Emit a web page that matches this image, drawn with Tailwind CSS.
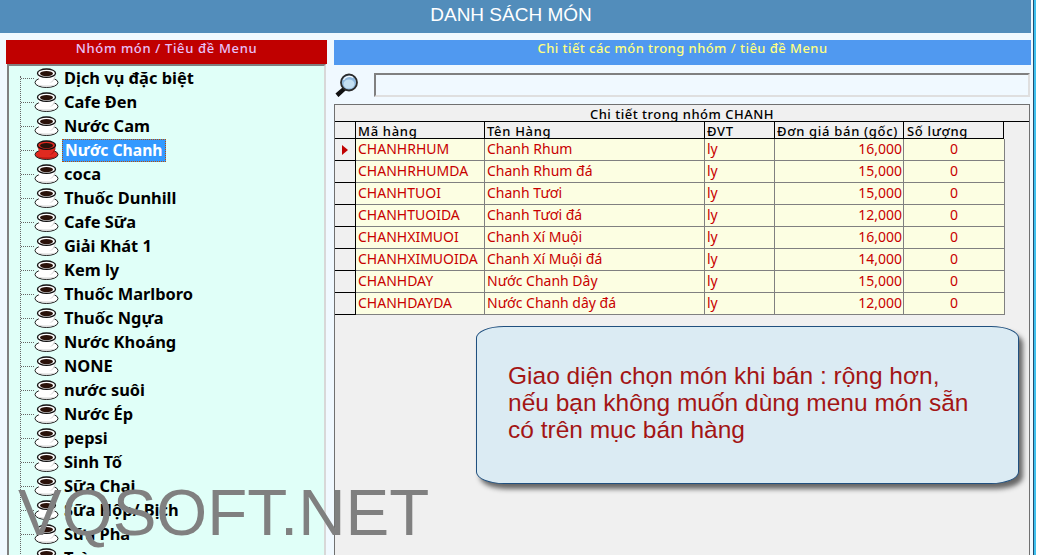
<!DOCTYPE html>
<html lang="en">
<head>
  <meta charset="UTF-8" />
  <title>Danh sách món</title>
  <script src="https://cdn.jsdelivr.net/npm/@tailwindcss/browser@4"></script>
</head>
<body class="bg-[#f0f9ff] font-['Noto_Sans',sans-serif] overflow-hidden">
  <div class="relative w-[1037px] h-[555px] overflow-hidden">
    <!-- Title bar -->
    <div class="w-[1031px] h-[33px] pr-[9px] bg-[#528dbb] text-white text-center text-[19px] leading-[29px] font-['Liberation_Sans',sans-serif]">DANH SÁCH MÓN</div>

    <div class="flex mt-[7px] pl-[6px] gap-[7px]">
      <!-- Left: groups -->
      <div class="w-[321px] shrink-0">
        <div class="h-[24px] bg-[#c00000] text-[#e8c0f8] text-center text-[13px] font-medium leading-[17px] tracking-[0.65px]">Nhóm món / Tiêu đề Menu</div>
        <div id="tree" class="relative h-[491px] ml-px mr-px bg-[#e0fff8] border-2 border-b-0 border-t-[#808080] border-l-[#808080] border-r-[#d8d8d8] pl-[13px]"></div>
      </div>

      <!-- Right: detail -->
      <div class="w-[697px] shrink-0">
        <div class="h-[25px] bg-[#5099f0] text-[#ffff80] text-center text-[13px] font-medium leading-[17px] tracking-[0.45px]">Chi tiết các món trong nhóm / tiêu đề Menu</div>
        <div class="flex items-center h-[39px]">
          <svg class="w-[24px] h-[24px] ml-px" viewBox="0 0 24 24">
            <path d="M8 15 L1.5 20.5 L3.5 23 L10 17Z" fill="#111" stroke="#111" stroke-width="1.5"/>
            <circle cx="14" cy="9.5" r="8" fill="#8fb8dc" stroke="#2b2b2b" stroke-width="1.8"/>
            <ellipse cx="14" cy="11" rx="5.5" ry="4.5" fill="#c4e0f2"/>
            <path d="M8.5 7 A6.5 6.5 0 0 1 18 4.5" fill="none" stroke="#f4f8fb" stroke-width="1.2"/>
          </svg>
          <div class="ml-[15px] w-[656px] h-[24px] border-2 border-t-[#808080] border-l-[#808080] border-r-[#dfdfdf] border-b-[#dfdfdf]"></div>
        </div>

        <!-- Grid -->
        <div class="h-[451px] w-[696px] bg-[#f0f0f0] border border-[#707070] border-b-0 text-[14px] leading-[18px]">
          <div class="h-[17px] text-center text-black text-[13px] font-medium leading-[18px] tracking-[0.5px] border-b border-black">Chi tiết trong nhóm CHANH</div>
          <div class="flex h-[17px] w-[669px] text-[13px] font-medium leading-[19px] tracking-[0.7px] text-black border-b border-black overflow-hidden">
            <div class="w-[21px] shrink-0 border-r border-black"></div>
            <div class="w-[129px] shrink-0 border-r border-black pl-[2px]">Mã hàng</div>
            <div class="w-[220px] shrink-0 border-r border-black pl-[2px]">Tên Hàng</div>
            <div class="w-[70px] shrink-0 border-r border-black pl-[2px]">ĐVT</div>
            <div class="w-[129px] shrink-0 border-r border-black pl-[2px] whitespace-nowrap">Đơn giá bán (gốc)</div>
            <div class="w-[100px] shrink-0 border-r border-black pl-[3px]">Số lượng</div>
          </div>
          <div id="rows"></div>
        </div>
      </div>
    </div>

    <!-- Window edge -->
    <div class="absolute left-[1033px] top-0 w-px h-full bg-[#1f4f72]"></div>
    <div class="absolute left-[1034px] top-0 w-[2px] h-full bg-[#3fc0ee]"></div>
    <div class="absolute left-[1036px] top-0 w-px h-full bg-white"></div>

    <!-- Callout -->
    <div class="absolute left-[476px] top-[326px] w-[543px] h-[158px] bg-[#dbebf3] border border-[#20507f] rounded-[28px/12px] shadow-[4px_5px_5px_#666] pl-[31px] pt-[35px] text-[#a31515] text-[24.5px] leading-[27px] font-['Liberation_Sans',sans-serif] whitespace-nowrap">
      Giao diện chọn món khi bán : rộng hơn,<br />nếu bạn không muốn dùng menu món sẵn<br />có trên mục bán hàng
    </div>

    <!-- Watermark -->
    <div class="absolute left-[18px] top-[473px] text-[65.5px] leading-[80px] text-[#808080] font-['Liberation_Sans',sans-serif] whitespace-nowrap">VQSOFT.NET</div>
  </div>

  <script>
    const groups = ["Dịch vụ đặc biệt","Cafe Đen","Nước Cam","Nước Chanh","coca","Thuốc Dunhill","Cafe Sữa","Giải Khát 1","Kem ly","Thuốc Marlboro","Thuốc Ngựa","Nước Khoáng","NONE","nước suôi","Nước Ép","pepsi","Sinh Tố","Sữa Chai","Sữa Hộp/ Bịch","Sữa Pha","Trà"];
    const items = [
      ["CHANHRHUM","Chanh Rhum","16,000"],
      ["CHANHRHUMDA","Chanh Rhum đá","15,000"],
      ["CHANHTUOI","Chanh Tươi","15,000"],
      ["CHANHTUOIDA","Chanh Tươi đá","12,000"],
      ["CHANHXIMUOI","Chanh Xí Muội","16,000"],
      ["CHANHXIMUOIDA","Chanh Xí Muội đá","14,000"],
      ["CHANHDAY","Nước Chanh Dây","15,000"],
      ["CHANHDAYDA","Nước Chanh dây đá","12,000"]
    ];

    function cup(red) {
      const body = red ? "#e02a20" : "#ffffff";
      const shade = red ? "#b01510" : "#d4d4d4";
      return `<svg class="w-[25px] h-[21px] shrink-0" viewBox="0 0 25 21">
        <ellipse cx="12.5" cy="14.5" rx="11.5" ry="5" fill="${body}" stroke="#222" stroke-width="1"/>
        <path d="M3 16 C6 19.5 19 19.5 22 16 C19 18 6 18 3 16Z" fill="${shade}"/>
        <path d="M3.5 5.5 C4 11.5 7.5 15.5 12.5 15.5 C17.5 15.5 21 11.5 21.5 5.5Z" fill="${body}"/>
        <path d="M15 15 C18 14 20 11 21 7 L21.5 9 C20.5 12 18 15 15 15Z" fill="${shade}"/>
        <ellipse cx="12.5" cy="5.2" rx="9" ry="4.2" fill="${body}" stroke="#111" stroke-width="1.3"/>
        <ellipse cx="12.5" cy="5.6" rx="6.5" ry="2.6" fill="#2a120a"/>
      </svg>`;
    }

    document.getElementById("tree").innerHTML =
      `<div class="absolute left-[11px] top-[10px] h-[490px] border-l border-dotted border-[#666]"></div>` +
      groups.map((g, i) => `
        <div class="flex items-center h-[24px] relative">
          <div class="w-[13px] h-0 ml-[-1px] mr-[1px] shrink-0 border-t border-dotted border-[#666]"></div>
          <span class="ml-[-1px]">${cup(i === 3)}</span>
          ${i === 3
            ? `<span class="ml-[3px] px-[2px] h-[23px] leading-[20px] bg-[#3399ff] text-white border border-dotted border-[#c05000] text-[15.7px] font-bold whitespace-nowrap">${g}</span>`
            : `<span class="ml-[5px] text-black text-[16.4px] font-bold whitespace-nowrap">${g}</span>`}
        </div>`).join("");

    document.getElementById("rows").innerHTML = items.map((it, i) => `
      <div class="flex h-[22px] w-[670px] text-[#c80000] leading-[20px] overflow-hidden">
        <div class="w-[21px] shrink-0 bg-[#f0f0f0] border-r border-b border-black flex items-center pl-[7px]">
          ${i === 0 ? `<span class="w-0 h-0 border-y-[5px] border-y-transparent border-l-[6px] border-l-[#c00000]"></span>` : ""}
        </div>
        <div class="w-[129px] shrink-0 bg-[#fcfee2] border-r border-b border-[#808080] pl-[2px] whitespace-nowrap">${it[0]}</div>
        <div class="w-[220px] shrink-0 bg-[#fcfee2] border-r border-b border-[#808080] pl-[2px] whitespace-nowrap">${it[1]}</div>
        <div class="w-[70px] shrink-0 bg-[#fcfee2] border-r border-b border-[#808080] pl-[2px]">ly</div>
        <div class="w-[129px] shrink-0 bg-[#fcfee2] border-r border-b border-[#808080] pr-px text-right">${it[2]}</div>
        <div class="w-[101px] shrink-0 bg-[#fcfee2] border-r border-b border-[#808080] text-center">0</div>
      </div>`).join("");
  </script>
</body>
</html>
